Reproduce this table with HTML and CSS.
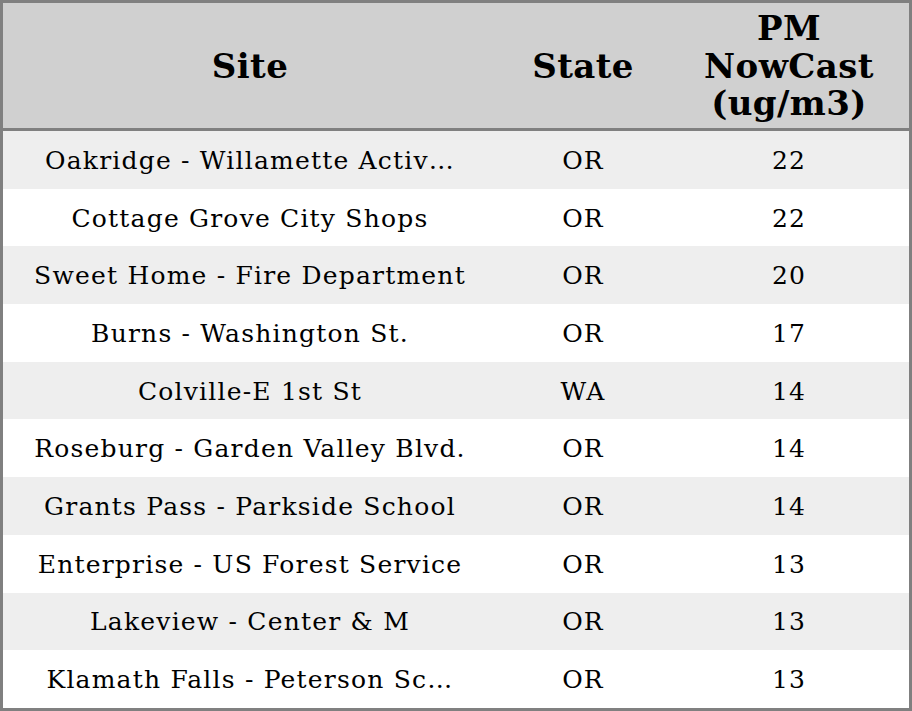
FILE: index.html
```html
<!DOCTYPE html>
<html>
<head>
<meta charset="utf-8">
<link rel="stylesheet" href="styles.css">
</head>
<body>
<table class="grid">
  <colgroup>
    <col class="c-site">
    <col class="c-state">
    <col class="c-pm">
  </colgroup>
  <thead>
    <tr>
      <th>Site</th>
      <th>State</th>
      <th>PM<br>NowCast<br>(ug/m3)</th>
    </tr>
  </thead>
  <tbody>
    <tr><td>Oakridge - Willamette Activ…</td><td>OR</td><td>22</td></tr>
    <tr><td>Cottage Grove City Shops</td><td>OR</td><td>22</td></tr>
    <tr><td>Sweet Home - Fire Department</td><td>OR</td><td>20</td></tr>
    <tr><td>Burns - Washington St.</td><td>OR</td><td>17</td></tr>
    <tr><td>Colville-E 1st St</td><td>WA</td><td>14</td></tr>
    <tr><td>Roseburg - Garden Valley Blvd.</td><td>OR</td><td>14</td></tr>
    <tr><td>Grants Pass - Parkside School</td><td>OR</td><td>14</td></tr>
    <tr><td>Enterprise - US Forest Service</td><td>OR</td><td>13</td></tr>
    <tr><td>Lakeview - Center &amp; M</td><td>OR</td><td>13</td></tr>
    <tr><td>Klamath Falls - Peterson Sc…</td><td>OR</td><td>13</td></tr>
  </tbody>
</table>
</body>
</html>
```
FILE: styles.css
```css
html, body {
  margin: 0;
  padding: 0;
  background: #ffffff;
}
.grid {
  width: 912px;
  height: 711px;
  border: 3px solid #808080;
  border-spacing: 0;
  table-layout: fixed;
  font-family: "DejaVu Serif", serif;
  color: #000;
}
.c-site { width: 494px; }
.c-state { width: 172px; }
.c-pm { width: 240px; }
.grid th {
  height: 123px;
  padding: 2px 0 0;
  background: #d0d0d0;
  border-bottom: 3px solid #808080;
  font-size: 34px;
  font-weight: bold;
  line-height: 37.5px;
  letter-spacing: 0.4px;
  text-align: center;
  vertical-align: middle;
}
.grid td {
  height: 56.7px;
  padding: 1px 0 0;
  font-size: 25px;
  letter-spacing: 1.2px;
  text-align: center;
  vertical-align: middle;
  white-space: nowrap;
  background: #ffffff;
}
.grid tbody tr:nth-child(odd) td {
  background: #eeeeee;
}
```
